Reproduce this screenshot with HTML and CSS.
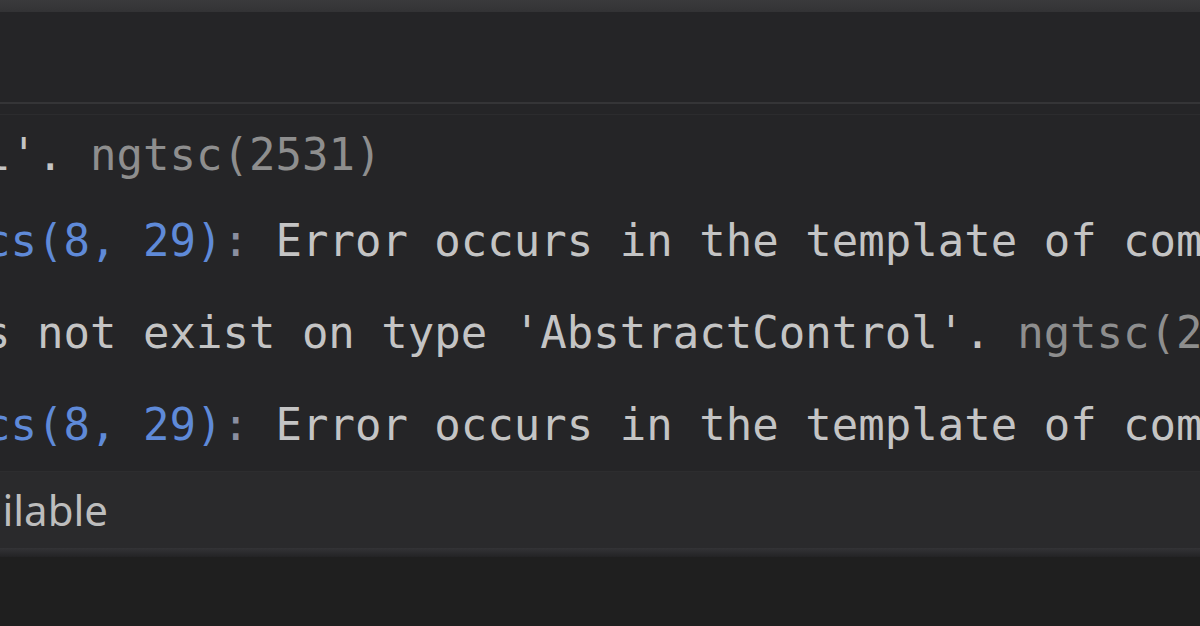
FILE: index.html
```html
<!DOCTYPE html>
<html lang="en">
<head>
<meta charset="utf-8">
<title>Hover</title>
<link rel="stylesheet" href="styles.css">
</head>
<body>
<div class="page">
  <div class="topbar"></div>
  <div class="hover">
    <div class="hover-head"></div>
    <div class="sep"></div>
    <div class="sep-faint"></div>
    <div class="code">
      <div class="line first"><span class="msg">l'.</span> <span class="code-id">ngtsc(2531)</span></div>
      <div class="line"><span class="link">cs(8, 29)</span><span class="colon">:</span> <span class="msg">Error occurs in the template of component</span></div>
      <div class="line"><span class="msg">s not exist on type 'AbstractControl'.</span> <span class="code-id">ngtsc(2339)</span></div>
      <div class="line"><span class="link">cs(8, 29)</span><span class="colon">:</span> <span class="msg">Error occurs in the template of component</span></div>
    </div>
    <div class="status">
      <div class="status-text"><span>No quick fixes available</span></div>
    </div>
  </div>
  <div class="edge"></div>
  <div class="editor"></div>
</div>
</body>
</html>
```

FILE: styles.css
```css
html, body {
  margin: 0;
  padding: 0;
  background: #1f1f1f;
}

.page {
  width: 1200px;
  height: 626px;
  overflow: hidden;
  display: flex;
  flex-direction: column;
  background: #1f1f1f;
}

.topbar {
  height: 12px;
  flex: none;
  background: linear-gradient(#3a3a3c, #333335);
}

.hover {
  flex: none;
  display: flex;
  flex-direction: column;
  background: #252527;
}

.hover-head {
  height: 90px;
}

.sep {
  height: 2px;
  background: #353537;
}

.sep-faint {
  height: 1px;
  margin-top: 10px;
  background: #2c2c2e;
}

.code {
  font-family: "DejaVu Sans Mono", "Liberation Mono", monospace;
  font-size: 44px;
  color: #c4c4c4;
  margin-left: -16px;
}

.line {
  height: 92px;
  line-height: 92px;
  white-space: pre;
}

.line.first {
  height: 80px;
  line-height: 80px;
}

.code-id {
  color: #8e8e8e;
}

.link {
  color: #5f8ad8;
}

.colon {
  color: #8a8fa0;
}

.status {
  height: 76px;
  display: flex;
  align-items: center;
  background: #2a2a2c;
  border-top: 1px solid #2d2d2f;
}

.status-text {
  width: 108px;
  overflow: hidden;
  display: flex;
  justify-content: flex-end;
  white-space: nowrap;
  font-family: "Noto Sans", "Open Sans", sans-serif;
  font-size: 42px;
  line-height: 76px;
  color: #bdbdbd;
}

.edge {
  height: 9px;
  flex: none;
  background: linear-gradient(#333336, #232325);
}

.editor {
  flex: 1;
  background: #1f1f1f;
}
```
